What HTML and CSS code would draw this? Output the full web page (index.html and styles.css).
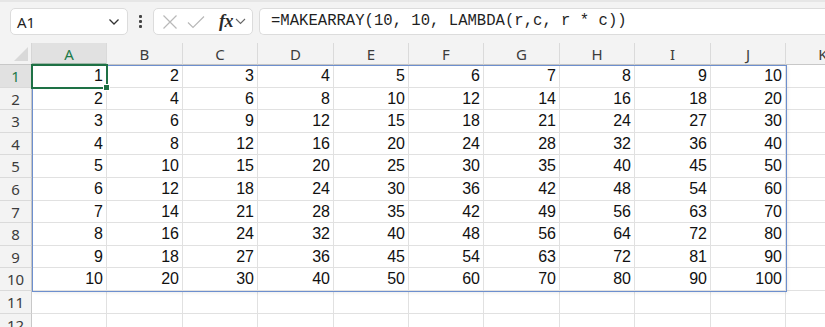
FILE: index.html
```html
<!DOCTYPE html>
<html>
<head>
<meta charset="utf-8">
<link rel="stylesheet" href="styles.css">
</head>
<body>
<div class="app">
  <div class="toolbar">
    <div class="namebox">
      <span class="ref">A1</span>
      <svg class="chev" width="12" height="8" viewBox="0 0 12 8"><path d="M1.5 1.5 L6 6 L10.5 1.5" fill="none" stroke="#333" stroke-width="1.3"/></svg>
    </div>
    <div class="vdots"><span></span><span></span><span></span></div>
    <div class="fnbox">
      <svg class="ic" width="16" height="16" viewBox="0 0 16 16"><path d="M1.5 1.5 L14.5 14.5 M14.5 1.5 L1.5 14.5" stroke="#b9b9b9" stroke-width="1.2" fill="none"/></svg>
      <svg class="ic" width="18" height="14" viewBox="0 0 18 14"><path d="M1 7.5 L6 12.5 L17 1.5" stroke="#b9b9b9" stroke-width="1.2" fill="none"/></svg>
      <span class="fx">fx</span>
      <svg class="chev small" width="11" height="7" viewBox="0 0 11 7"><path d="M1 1 L5.5 5.5 L10 1" fill="none" stroke="#666" stroke-width="1.1"/></svg>
    </div>
    <div class="formula">=MAKEARRAY(10, 10, LAMBDA(r,c, r * c))</div>
  </div>
  <div class="sheet">
    <div class="grid" id="grid">
      <div class="corner"><span class="tri"></span></div>
      <div class="ch sel">A</div><div class="ch">B</div><div class="ch">C</div><div class="ch">D</div><div class="ch">E</div><div class="ch">F</div><div class="ch">G</div><div class="ch">H</div><div class="ch">I</div><div class="ch">J</div><div class="ch">K</div>
    </div>
    <div class="spill"></div>
    <div class="active"><span class="handle"></span></div>
  </div>
</div>
<script src="app.js"></script>
</body>
</html>
```
FILE: app.js
```js
(function () {
  var grid = document.getElementById('grid');
  var html = '';
  for (var r = 1; r <= 12; r++) {
    html += '<div class="rh' + (r === 1 ? ' sel' : '') + '">' + r + '</div>';
    for (var c = 1; c <= 11; c++) {
      var v = (r <= 10 && c <= 10) ? (r * c) : '';
      html += '<div class="cell">' + v + '</div>';
    }
  }
  grid.insertAdjacentHTML('beforeend', html);
})();
```
FILE: styles.css
```css
html, body {
  margin: 0;
  padding: 0;
  background: #ffffff;
}
.app {
  width: 825px;
  height: 327px;
  overflow: hidden;
  font-family: "Noto Sans", "Open Sans", sans-serif;
}
.toolbar {
  height: 43px;
  box-sizing: border-box;
  background: #f3f3f3;
  border-top: 2px solid #e6e6e6;
  display: flex;
  align-items: flex-start;
  padding: 6px 0 0 10px;
  gap: 0;
}
.namebox {
  width: 118px;
  height: 27px;
  box-sizing: border-box;
  background: #fff;
  border: 1px solid #dcdcdc;
  border-radius: 5px;
  display: flex;
  align-items: center;
  justify-content: space-between;
  padding: 0 7px 0 6px;
}
.ref {
  font-size: 15px;
  color: #1f1f1f;
}
.vdots {
  width: 25px;
  height: 27px;
  display: flex;
  flex-direction: column;
  align-items: center;
  justify-content: center;
  gap: 2px;
}
.vdots span {
  width: 3px;
  height: 3px;
  background: #444;
  border-radius: 1px;
}
.fnbox {
  width: 100px;
  height: 27px;
  box-sizing: border-box;
  background: #fff;
  border: 1px solid #dcdcdc;
  border-radius: 5px;
  display: flex;
  align-items: center;
  padding: 0 0 0 8px;
  gap: 9px;
}
.fnbox .ic {
  flex: none;
}
.fx {
  font-family: "Liberation Serif", "DejaVu Serif", serif;
  font-style: italic;
  font-weight: bold;
  font-size: 18px;
  color: #2a2a2a;
  margin-left: 5px;
  letter-spacing: -0.5px;
}
.chev.small {
  margin-left: -7px;
}
.formula {
  margin-left: 6px;
  flex: 1;
  height: 27px;
  box-sizing: border-box;
  background: #fff;
  border: 1px solid #dcdcdc;
  border-right: none;
  border-radius: 5px 0 0 5px;
  font-family: "Liberation Mono", "DejaVu Sans Mono", monospace;
  font-size: 15.6px;
  line-height: 25px;
  color: #1f1f1f;
  padding-left: 11px;
  white-space: nowrap;
}
.sheet {
  position: relative;
}
.grid {
  display: grid;
  grid-template-columns: 32px 75px 76px 75px 76px 75px 75px 76px 75px 76px 75px 75px;
  grid-template-rows: 22px 23px 22px 23px 22px 23px 23px 22px 23px 22px 23px 23px 23px;
}
.corner {
  background: #f3f3f3;
  border-right: 1px solid #d6d6d6;
  border-bottom: 1px solid #c8c8c8;
  box-sizing: border-box;
  position: relative;
}
.tri {
  position: absolute;
  right: 3px;
  bottom: 3px;
  width: 0;
  height: 0;
  border-left: 14px solid transparent;
  border-bottom: 14px solid #d9d9d9;
}
.ch {
  background: #f3f3f3;
  border-right: 1px solid #dadada;
  border-bottom: 1px solid #c8c8c8;
  box-sizing: border-box;
  font-size: 15px;
  color: #3c3c3c;
  text-align: center;
  line-height: 22px;
}
.ch.sel, .rh.sel {
  background: #e1e1e1;
  color: #1d7a4a;
}
.ch.sel {
  border-bottom: 2px solid #9fb8a8;
}
.rh {
  background: #f3f3f3;
  border-right: 1px solid #c8c8c8;
  border-bottom: 1px solid #dadada;
  box-sizing: border-box;
  font-size: 15px;
  color: #3c3c3c;
  text-align: center;
  display: flex;
  align-items: center;
  justify-content: center;
}
.cell {
  border-right: 1px solid #e1e1e1;
  border-bottom: 1px solid #e1e1e1;
  box-sizing: border-box;
  font-family: "Liberation Sans", Arial, sans-serif;
  font-size: 16px;
  color: #111;
  text-align: right;
  padding-right: 3px;
  display: flex;
  align-items: center;
  justify-content: flex-end;
}
.spill {
  position: absolute;
  left: 32px;
  top: 22px;
  width: 755px;
  height: 227px;
  box-sizing: border-box;
  border: 1px solid #6d8fce;
  box-shadow: 1px 1px 3px rgba(0,0,0,0.08);
  pointer-events: none;
}
.active {
  position: absolute;
  left: 31px;
  top: 21px;
  width: 77px;
  height: 25px;
  box-sizing: border-box;
  border: 2px solid #1e7145;
  pointer-events: none;
}
.handle {
  position: absolute;
  right: -4px;
  bottom: -4px;
  width: 5px;
  height: 5px;
  background: #1e7145;
  border: 1px solid #fff;
}
```
